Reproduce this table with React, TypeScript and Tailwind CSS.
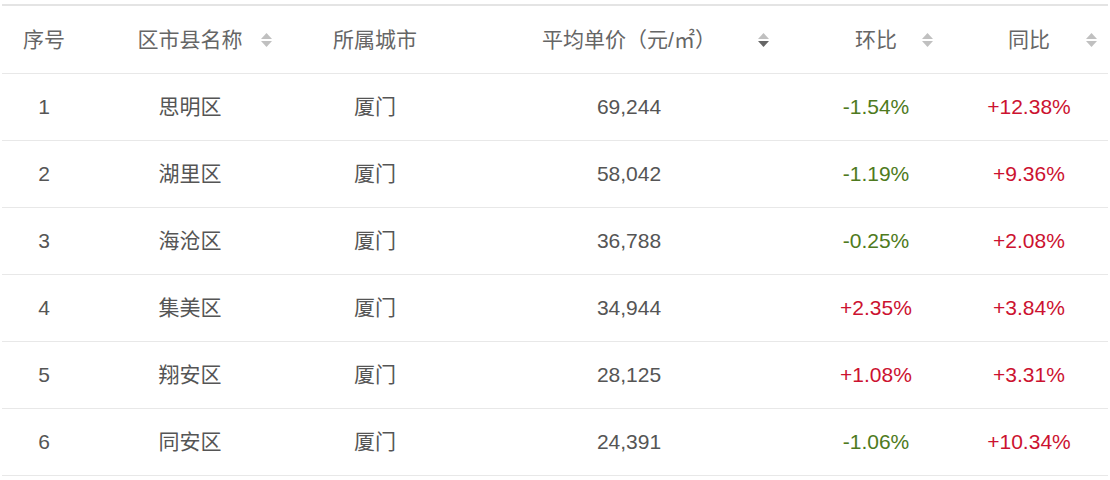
import React from "react";

type Row = { id: number; name: string; city: string; price: string; mom: string; yoy: string };

const rows: Row[] = [
  { id: 1, name: "思明区", city: "厦门", price: "69,244", mom: "-1.54%", yoy: "+12.38%" },
  { id: 2, name: "湖里区", city: "厦门", price: "58,042", mom: "-1.19%", yoy: "+9.36%" },
  { id: 3, name: "海沧区", city: "厦门", price: "36,788", mom: "-0.25%", yoy: "+2.08%" },
  { id: 4, name: "集美区", city: "厦门", price: "34,944", mom: "+2.35%", yoy: "+3.84%" },
  { id: 5, name: "翔安区", city: "厦门", price: "28,125", mom: "+1.08%", yoy: "+3.31%" },
  { id: 6, name: "同安区", city: "厦门", price: "24,391", mom: "-1.06%", yoy: "+10.34%" },
];

function SortIcon({ active = false }: { active?: boolean }) {
  return (
    <svg width="11" height="14" viewBox="0 0 11 14" className="shrink-0">
      <polygon points="0,6 5.5,0 11,6" fill="#c0c0c0" />
      <polygon points="0,8 5.5,14 11,8" fill={active ? "#666666" : "#c0c0c0"} />
    </svg>
  );
}

function tone(v: string) {
  return v.startsWith("+") ? "text-[#cc1230]" : "text-[#4e7a20]";
}

export default function App() {
  return (
    <div
      className="w-[1110px] h-[480px] bg-white overflow-hidden pt-[4px] pl-[2px]"
      style={{ fontFamily: '"Liberation Sans", "Noto Sans CJK SC", sans-serif' }}
    >
      <div className="w-[1106px] border-t-2 border-[#e4e4e4] text-[21px]">
        {/* header */}
        <div className="flex h-[68px] items-center border-b border-[#e8e8e8] text-[#666]">
          <div className="w-[84px] text-center">序号</div>
          <div className="w-[208px] flex items-center px-[22px]">
            <span className="w-[11px] shrink-0" />
            <span className="flex-1 text-center">区市县名称</span>
            <SortIcon />
          </div>
          <div className="w-[162px] text-center">所属城市</div>
          <div className="w-[346px] flex items-center px-[33px]">
            <span className="w-[11px] shrink-0" />
            <span className="flex-1 text-center">平均单价（元/㎡）</span>
            <SortIcon active />
          </div>
          <div className="w-[148px] flex items-center px-[17px]">
            <span className="w-[11px] shrink-0" />
            <span className="flex-1 text-center">环比</span>
            <SortIcon />
          </div>
          <div className="w-[158px] flex items-center px-[11px]">
            <span className="w-[11px] shrink-0" />
            <span className="flex-1 text-center">同比</span>
            <SortIcon />
          </div>
        </div>
        {rows.map((r) => (
          <div key={r.id} className="flex h-[67px] items-center border-b border-[#e8e8e8] text-[#555]">
            <div className="w-[84px] text-center">{r.id}</div>
            <div className="w-[208px] text-center">{r.name}</div>
            <div className="w-[162px] text-center">{r.city}</div>
            <div className="w-[346px] text-center">{r.price}</div>
            <div className={`w-[148px] text-center ${tone(r.mom)}`}>{r.mom}</div>
            <div className={`w-[158px] text-center ${tone(r.yoy)}`}>{r.yoy}</div>
          </div>
        ))}
      </div>
    </div>
  );
}
